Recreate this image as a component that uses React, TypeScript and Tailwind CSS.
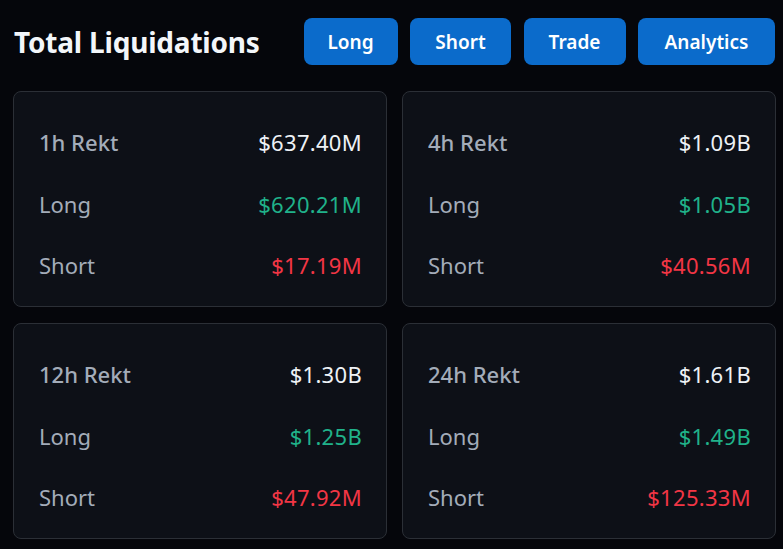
import React from "react";

type Card = { title: string; total: string; long: string; short: string };

const cards: Card[] = [
  { title: "1h Rekt", total: "$637.40M", long: "$620.21M", short: "$17.19M" },
  { title: "4h Rekt", total: "$1.09B", long: "$1.05B", short: "$40.56M" },
  { title: "12h Rekt", total: "$1.30B", long: "$1.25B", short: "$47.92M" },
  { title: "24h Rekt", total: "$1.61B", long: "$1.49B", short: "$125.33M" },
];

const buttons = [
  { label: "Long", w: "w-[94px]" },
  { label: "Short", w: "w-[101px]" },
  { label: "Trade", w: "w-[102px]" },
  { label: "Analytics", w: "w-[137px]" },
];

export default function App() {
  return (
    <div
      className="w-[783px] h-[549px] bg-[#05060b] overflow-hidden"
      style={{ fontFamily: '"Noto Sans", "Open Sans", sans-serif' }}
    >
      <div className="flex items-center justify-between pl-[14px] pr-[8px] pt-[18px]">
        <h1 className="text-[28px] font-bold text-[#f3f6fa] tracking-[-0.2px] leading-none">
          Total Liquidations
        </h1>
        <div className="flex gap-[12.5px]">
          {buttons.map((b) => (
            <div
              key={b.label}
              className={`${b.w} h-[47px] rounded-[8px] bg-[#0b6bcb] flex items-center justify-center pt-[2px] text-white text-[19px] font-semibold`}
            >
              {b.label}
            </div>
          ))}
        </div>
      </div>
      <div className="grid grid-cols-[374px_374px] gap-x-[15px] gap-y-[16px] pl-[13px] pt-[26px]">
        {cards.map((c) => (
          <div
            key={c.title}
            className="h-[216px] rounded-[8px] border border-[#2b2f36] bg-[#0d1017] pl-[25px] pr-[24px] pt-[34px] flex flex-col gap-[29.5px] text-[22px] leading-[32px]"
          >
            <div className="flex justify-between">
              <span className="text-[#a3acb9] font-medium">{c.title}</span>
              <span className="text-[#eef2f6] tracking-[0.3px]">{c.total}</span>
            </div>
            <div className="flex justify-between">
              <span className="text-[#a3acb9]">Long</span>
              <span className="text-[#20b28a] tracking-[0.3px]">{c.long}</span>
            </div>
            <div className="flex justify-between">
              <span className="text-[#a3acb9]">Short</span>
              <span className="text-[#f23645] tracking-[0.3px]">{c.short}</span>
            </div>
          </div>
        ))}
      </div>
    </div>
  );
}
